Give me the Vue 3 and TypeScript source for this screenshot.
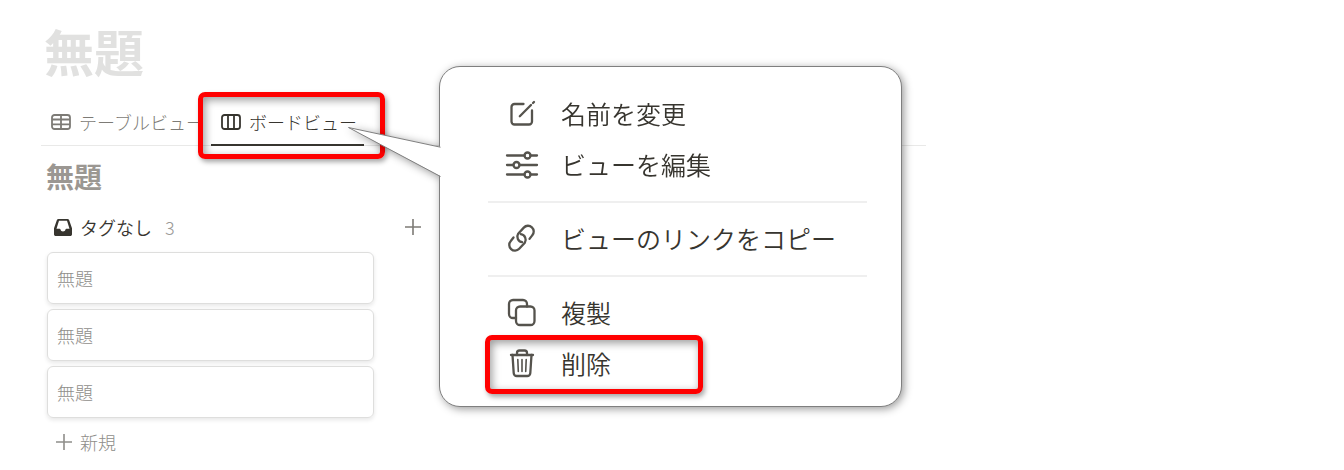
<script setup lang="ts">
import { ref } from 'vue'

type IconName = 'rename' | 'sliders' | 'link' | 'copy' | 'trash'

interface MenuItem {
  icon: IconName
  label: string
  marked?: boolean
}

const activeTab = ref<'table' | 'board'>('board')

const cards = ref<string[]>(['無題', '無題', '無題'])

const menuGroups: MenuItem[][] = [
  [
    { icon: 'rename', label: '名前を変更' },
    { icon: 'sliders', label: 'ビューを編集' },
  ],
  [{ icon: 'link', label: 'ビューのリンクをコピー' }],
  [
    { icon: 'copy', label: '複製' },
    { icon: 'trash', label: '削除', marked: true },
  ],
]

function addCard(): void {
  cards.value.push('無題')
}
</script>

<template>
  <div class="page">
    <main class="database">
      <h1 class="title">無題</h1>

      <div class="tabs" role="tablist">
        <button
          class="tab"
          :class="{ active: activeTab === 'table' }"
          type="button"
          role="tab"
          :aria-selected="activeTab === 'table'"
          @click="activeTab = 'table'"
        >
          <svg class="tab-icon" viewBox="0 0 20 16" aria-hidden="true">
            <rect x="1" y="1" width="18" height="14" rx="2.5" />
            <path d="M1 5.5h18M1 10.3h18M10 1v14" />
          </svg>
          テーブルビュー
        </button>
        <button
          class="tab"
          :class="{ active: activeTab === 'board' }"
          type="button"
          role="tab"
          :aria-selected="activeTab === 'board'"
          @click="activeTab = 'board'"
        >
          <svg class="tab-icon" viewBox="0 0 20 16" aria-hidden="true">
            <rect x="1" y="1" width="18" height="14" rx="2.5" />
            <path d="M7 1v14M13 1v14" />
          </svg>
          ボードビュー
          <span class="mark mark-tab" aria-hidden="true"></span>
        </button>
      </div>

      <h2 class="subtitle">無題</h2>

      <section class="group">
        <header class="group-head">
          <svg class="inbox" viewBox="0 0 18 17" aria-hidden="true">
            <path
              fill-rule="evenodd"
              d="M4.600 0h8.800c.9 0 1.500.4 1.800 1.200L18 9.300V15.200c0 1.100-.7 1.800-1.800 1.800H1.800C.7 17 0 16.300 0 15.200V9.300L2.800 1.200C3.100.4 3.700 0 4.600 0zM5 1.800 2.500 9.800H5.600c.5 0 .8.300.9.800.2 1.200 1.200 2 2.500 2s2.300-.8 2.500-2c.1-.5.4-.8.9-.8h3.100L13 1.800z"
            />
          </svg>
          <h3 class="group-name">タグなし</h3>
          <span class="count">3</span>
          <button class="add" type="button" aria-label="追加" @click="addCard">
            <svg class="plus" viewBox="0 0 16 16" aria-hidden="true"><path d="M8 0v16M0 8h16" /></svg>
          </button>
        </header>

        <ul class="cards">
          <li v-for="(card, i) in cards" :key="i">
            <button class="card" type="button">{{ card }}</button>
          </li>
        </ul>

        <button class="new" type="button" @click="addCard">
          <svg class="plus" viewBox="0 0 16 16" aria-hidden="true"><path d="M8 0v16M0 8h16" /></svg>
          新規
        </button>
      </section>
    </main>

    <div class="callout">
      <svg class="tail" viewBox="0 0 94 52" aria-hidden="true">
        <path class="tail-fill" d="M94 20.200 0.500 0.500 94 50z" />
        <path class="tail-line" d="M92.500 20.200 0.500 0.500 92.500 49.500" />
      </svg>
      <div class="menu" role="menu">
        <template v-for="(group, g) in menuGroups" :key="g">
          <hr v-if="g > 0" class="rule" />
          <button v-for="item in group" :key="item.label" class="item" type="button" role="menuitem">
            <svg class="item-icon" viewBox="0 0 34 34" aria-hidden="true">
              <g v-if="item.icon === 'rename'">
                <path d="M18.500 7H9.500A3 3 0 0 0 6.500 10V24.500A3 3 0 0 0 9.500 27.500H24A3 3 0 0 0 27 24.500V13.500" />
                <path d="M14.800 19.200 26 8" />
                <path d="M28 6 29 5" />
              </g>
              <g v-else-if="item.icon === 'sliders'">
                <path d="M2 7.500H19.500M25.500 7.500H32M2 17H8.500M14.500 17H32M2 26.500H19.500M25.500 26.500H32" />
                <circle cx="22.500" cy="7.500" r="3" />
                <circle cx="11.500" cy="17" r="3" />
                <circle cx="22.500" cy="26.500" r="3" />
              </g>
              <g v-else-if="item.icon === 'link'">
                <path d="M17.200 20.200A5.600 5.600 0 0 1 13.200 11.600L18.800 5.600A5.700 5.700 0 0 1 27.200 13.400L24.500 16.900" />
                <path d="M15.800 12.200A5.600 5.600 0 0 1 19.800 20.800L14.200 26.800A5.700 5.700 0 0 1 5.800 19L8.500 15.500" />
              </g>
              <g v-else-if="item.icon === 'copy'">
                <rect x="11" y="10.500" width="18.500" height="18.500" rx="4" />
                <path d="M11 22H8A4 4 0 0 1 4 18V8A4 4 0 0 1 8 4H18A4 4 0 0 1 22 8V10.500" />
              </g>
              <g v-else>
                <path d="M6 8H28" />
                <path d="M12 8V6A2.500 2.500 0 0 1 14.500 3.500H19.500A2.500 2.500 0 0 1 22 6V8" />
                <path d="M7.500 8 8.700 26A3 3 0 0 0 11.700 29H22.300A3 3 0 0 0 25.300 26L26.500 8" />
                <path class="thin" d="M12.800 12.500 13.300 24.500M17 12.500V24.500M21.200 12.500 20.700 24.500" />
              </g>
            </svg>
            {{ item.label }}
            <span v-if="item.marked" class="mark mark-item" aria-hidden="true"></span>
          </button>
        </template>
      </div>
    </div>
  </div>
</template>

<style>
body {
  margin: 0;
  background: #fff;
}
</style>

<style scoped>
.page {
  position: relative;
  box-sizing: border-box;
  padding: 20px 41px 0;
  overflow: hidden;
  color: #37352f;
  font-family: 'Noto Sans CJK JP', 'Noto Sans', sans-serif;
  font-size: 18px;
  font-weight: 300;
  line-height: 24px;
}

button {
  margin: 0;
  padding: 0;
  border: 0;
  background: none;
  color: inherit;
  font: inherit;
  text-align: left;
  white-space: nowrap;
  cursor: pointer;
}

h1,
h2,
h3 {
  margin: 0;
}

svg {
  flex: none;
  fill: none;
  stroke: currentColor;
}

.database {
  max-width: 885px;
}

.title {
  padding: 0 3px;
  color: #e1e1e0;
  font-size: 50px;
  font-weight: 700;
  line-height: 60px;
}

.tabs {
  display: flex;
  height: 46px;
  margin-top: 20px;
  box-shadow: inset 0 -1px #e9e9e8;
}

.tab {
  position: relative;
  display: flex;
  align-items: center;
  gap: 8px;
  padding: 0 7px 0 10px;
  border-bottom: 2px solid transparent;
  color: #7d7b76;
}

.tab.active {
  border-color: #37352f;
  color: #37352f;
}

.tab-icon {
  width: 20px;
  height: 16px;
  stroke-width: 1.8;
}

.mark {
  position: absolute;
  box-sizing: border-box;
  border: 5px solid #f00;
  border-radius: 7px;
  box-shadow:
    2px 3px 5px rgba(0, 0, 0, 0.35),
    inset 2px 3px 8px rgba(0, 0, 0, 0.4);
  pointer-events: none;
}

.mark-tab {
  inset: -8px -21px -15px -13px;
}

.subtitle {
  margin-top: 10px;
  padding: 0 5px;
  color: #9b9792;
  font-size: 28px;
  font-weight: 700;
  line-height: 40px;
}

.group {
  width: 100%;
  max-width: 327px;
  padding: 0 6px;
}

.group-head {
  display: flex;
  align-items: center;
  height: 44px;
  margin: 9px -47px 3px 7px;
}

.inbox {
  width: 18px;
  height: 17px;
  margin-right: 8px;
  fill: #37352f;
  stroke: none;
}

.group-name {
  font-size: 18px;
  font-weight: 350;
}

.count {
  margin-left: 13px;
  color: #9b9a97;
}

.add {
  display: flex;
  margin-left: auto;
  color: #7d7b76;
}

.plus {
  width: 16px;
  height: 16px;
  stroke-width: 1.6;
}

.cards {
  display: grid;
  gap: 5px;
  margin: 0;
  padding: 0;
  list-style: none;
}

.card {
  display: block;
  box-sizing: border-box;
  width: 100%;
  height: 52px;
  padding: 0 9px;
  border: 1px solid #dededd;
  border-radius: 6px;
  box-shadow: 0 2px 4px rgba(15, 15, 15, 0.1);
  color: #8f8e8a;
}

.new {
  display: flex;
  align-items: center;
  gap: 8px;
  height: 48px;
  padding: 0 9px;
  color: #8f8e8a;
}

.callout {
  position: absolute;
  top: 66px;
  left: 439px;
  box-sizing: border-box;
  width: 463px;
  padding: 22px 34px 16px 48px;
  border: 1px solid #7f7f7f;
  border-radius: 21px;
  background: #fff;
  filter: drop-shadow(2px 2px 4px rgba(0, 0, 0, 0.4));
}

.tail {
  position: absolute;
  top: 60px;
  left: -92px;
  width: 94px;
  height: 52px;
}

.tail-fill {
  fill: #fff;
  stroke: none;
}

.tail-line {
  stroke: #7f7f7f;
}

.menu {
  display: flex;
  flex-direction: column;
  font-size: 25px;
  font-weight: 350;
  line-height: 49px;
}

.item {
  position: relative;
  display: flex;
  align-items: center;
  gap: 22px;
  padding: 0 0 2px 17px;
}

.item-icon {
  width: 34px;
  height: 34px;
  color: #55534d;
  stroke-width: 2.3;
  stroke-linecap: round;
}

.thin {
  stroke-width: 1.6;
}

.rule {
  width: 100%;
  height: 2px;
  margin: 10px 0 11px;
  border: 0;
  background: #efefef;
}

.mark-item {
  top: -4px;
  left: -3px;
  width: 218px;
  height: 59px;
}
</style>
